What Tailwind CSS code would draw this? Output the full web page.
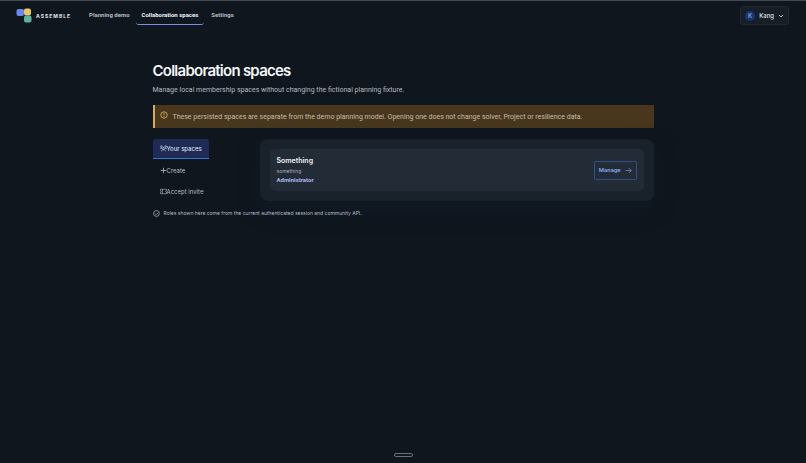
<!DOCTYPE html>
<html lang="en">
<head>
    <meta charset="UTF-8">
    <meta name="viewport" content="width=device-width, initial-scale=1.0">
    <title>Assemble - Collaboration spaces</title>
    <script src="https://cdn.jsdelivr.net/npm/@tailwindcss/browser@4"></script>
</head>
<body class="flex min-h-screen flex-col border-t border-[#414951] bg-[#0f161e] font-['Roboto',sans-serif] text-[6px] leading-[8px] text-[#b4bbc3]">

    <header class="flex h-[29px] items-center justify-between pr-[17px] pl-4">
        <div class="flex items-center">
            <a href="#" class="flex items-center gap-1 font-['Inter',sans-serif] text-[5px] font-bold tracking-[1px] text-[#e3e8ee]">
                <svg class="h-4 w-4" viewBox="0 0 16 16" aria-hidden="true">
                    <rect x="0.5" y="1" width="7.5" height="7" rx="2" fill="#6688f0"/>
                    <rect x="8" y="0.5" width="7" height="7" rx="2" fill="#e9c565"/>
                    <rect x="8" y="7.5" width="7.5" height="7" rx="2" fill="#58b5a0"/>
                </svg>
                ASSEMBLE
            </a>
            <nav class="ml-3 flex items-center font-bold">
                <a href="#" class="flex h-[19px] items-center border-b border-transparent px-[6px]">Planning demo</a>
                <a href="#" class="flex h-[19px] items-center rounded-[3px] border-b border-[#7592e8] px-[6px] text-[#f0f3f7]" aria-current="page">Collaboration spaces</a>
                <a href="#" class="flex h-[19px] items-center border-b border-transparent px-[7px]">Settings</a>
            </nav>
        </div>
        <button type="button" class="flex h-[19px] items-center gap-1 rounded-[3px] border border-[#202832] bg-[#171e27] px-1 font-['Inter',sans-serif] font-medium text-[#dce1e7]">
            <span class="flex h-[10px] w-[10px] items-center justify-center rounded-full bg-[#17366d] text-[#7faaf5]">K</span>
            Kang
            <svg class="h-[6px] w-[6px]" viewBox="0 0 6 6" fill="none" stroke="currentColor" stroke-width="0.8" aria-hidden="true"><path d="M1 2l2 2 2-2"/></svg>
        </button>
    </header>

    <main class="mx-auto w-full max-w-[501px] pt-[31px]">
        <h1 class="font-['Inter',sans-serif] text-[15px] leading-[20px] font-semibold tracking-tighter text-[#f3f6f9]">Collaboration spaces</h1>
        <p class="mt-1 text-[7px] leading-[10px]">Manage local membership spaces without changing the fictional planning fixture.</p>

        <div class="mt-[10px] flex h-[23px] gap-[5px] border-l-2 border-[#d9ab60] bg-[#48371c] pl-[5px] text-[7px] leading-[10px] text-[#c3bcb0]" role="note">
            <svg class="mt-[6px] h-2 w-2 text-[#d9ab60]" viewBox="0 0 8 8" fill="none" stroke="currentColor" stroke-width="0.9" aria-hidden="true"><circle cx="4" cy="4" r="3.2"/><path d="M4 2v2.3M4 5v1"/></svg>
            <p class="mt-[7px]">These persisted spaces are separate from the demo planning model. Opening one does not change solver, Project or resilience data.</p>
        </div>

        <div class="mt-[11px] flex items-start justify-between">
            <div class="flex flex-col items-start gap-[2px] font-['Inter',sans-serif]" role="tablist">
                <button type="button" role="tab" aria-selected="true" class="flex h-5 w-14 items-center rounded-t-[3px] border-b border-[#3974c4] bg-[#1d2b56] pl-[7px] text-[#edf1f6]">
                    <svg class="h-[7px] w-[7px]" viewBox="0 0 7 7" fill="none" stroke="currentColor" stroke-width="0.6" aria-hidden="true"><circle cx="1.4" cy="1.6" r="0.8"/><circle cx="5.6" cy="1.6" r="0.8"/><circle cx="3.5" cy="3.4" r="0.9"/><path d="M0.3 3.5h1.5M5.2 3.5h1.5M1.6 6.2c0-2 3.8-2 3.8 0"/></svg>
                    Your spaces
                </button>
                <button type="button" role="tab" aria-selected="false" class="flex h-[19px] items-center pl-[7px]">
                    <svg class="h-[7px] w-[7px]" viewBox="0 0 7 7" fill="none" stroke="currentColor" stroke-width="0.8" aria-hidden="true"><path d="M3.5 0.7v5.6M0.7 3.5h5.6"/></svg>
                    Create
                </button>
                <button type="button" role="tab" aria-selected="false" class="flex h-[19px] items-center pl-[7px]">
                    <svg class="h-[7px] w-[7px]" viewBox="0 0 7 7" fill="none" stroke="currentColor" stroke-width="0.6" aria-hidden="true"><path d="M0.5 1.3h6v1.5a.7.7 0 0 0 0 1.4v1.5h-6V4.2a.7.7 0 0 0 0-1.4zM2.4 1.3v4.4"/></svg>
                    Accept invite
                </button>
            </div>

            <section class="w-[394px] rounded-lg bg-[#19212a] p-[10px] shadow-[0_8px_24px_rgba(20,32,46,0.3)]">
                <article class="flex items-center justify-between rounded-[5px] bg-[#232b36] p-[7px]">
                    <div>
                        <h2 class="font-['Inter',sans-serif] text-[7px] leading-[10px] font-semibold text-[#edf1f5]">Something</h2>
                        <p class="mt-[1px] font-['Inter',sans-serif] text-[5px] leading-[8px] text-[#aab2bc]">something</p>
                        <p class="mt-[1px] leading-[8px] font-bold text-[#a9bbf4]">Administrator</p>
                    </div>
                    <button type="button" class="flex h-[19px] items-center gap-1 rounded-[1px] border border-[#2b5283] px-1 font-medium text-[#83b3f3]">
                        Manage
                        <svg class="h-[7px] w-[7px]" viewBox="0 0 7 7" fill="none" stroke="currentColor" stroke-width="0.6" aria-hidden="true"><path d="M0.5 3.5h5.8M3.8 1L6.3 3.5 3.8 6"/></svg>
                    </button>
                </article>
            </section>
        </div>

        <p class="mt-2 flex items-center gap-1 font-['Inter',sans-serif] text-[5px]">
            <svg class="h-[7px] w-[7px]" viewBox="0 0 7 7" fill="none" stroke="currentColor" stroke-width="0.7" aria-hidden="true"><circle cx="3.5" cy="3.5" r="2.9"/><path d="M2 3.6l1.1 1.1 2-2.1"/></svg>
            Roles shown here come from the current authenticated session and community API.
        </p>
    </main>

    <footer class="mt-auto flex justify-center pb-[6px]">
        <div class="h-1 w-[19px] rounded-full border border-[#6a7178]"></div>
    </footer>

</body>
</html>
